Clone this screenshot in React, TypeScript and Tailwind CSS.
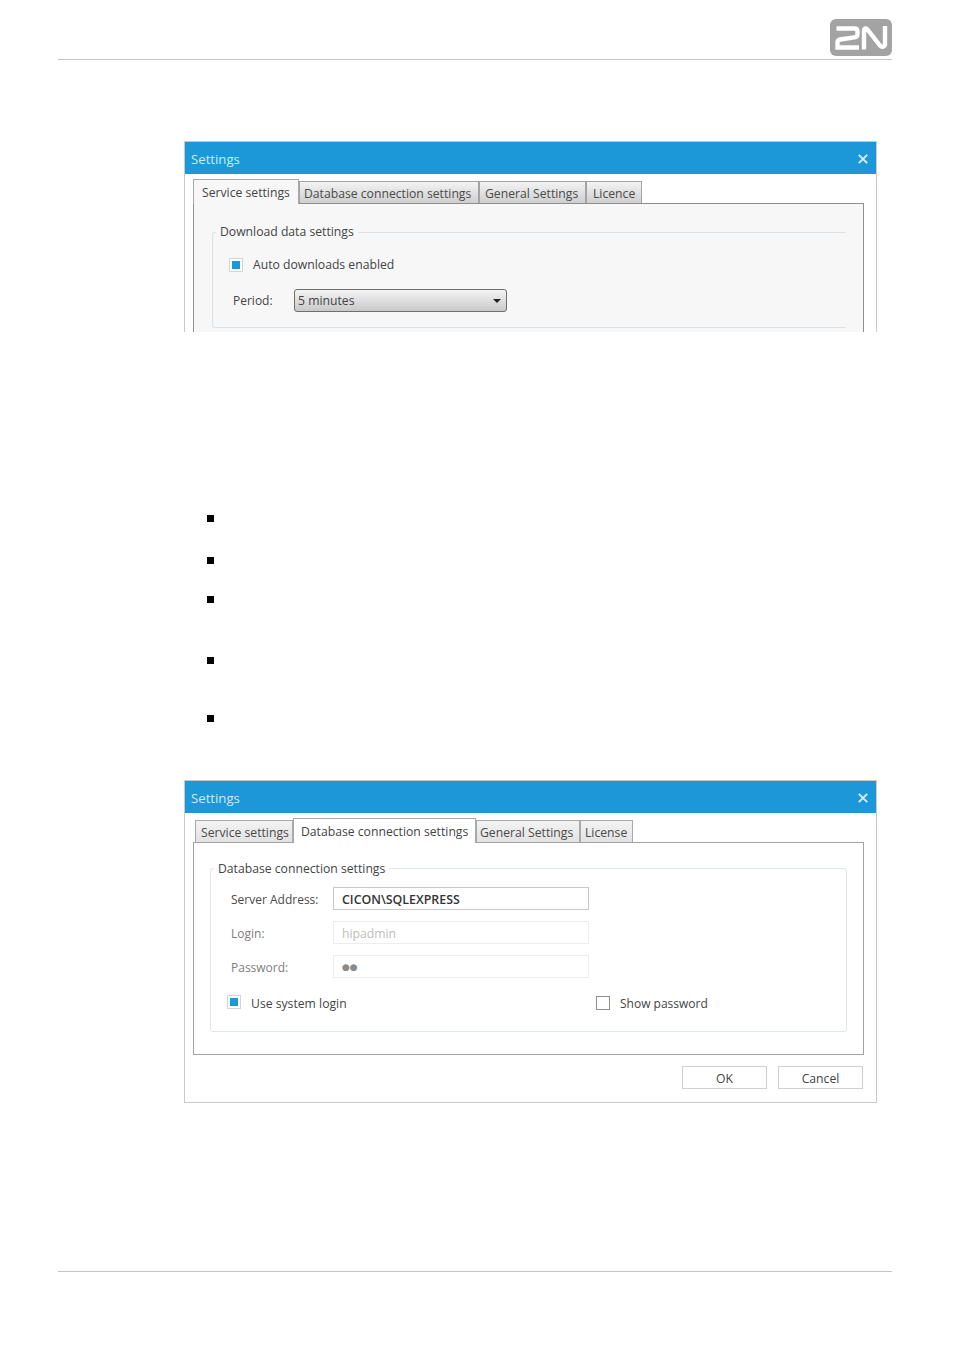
const font = { fontFamily: '"Open Sans", "Noto Sans", sans-serif' };

function Close() {
  return (
    <svg width="10" height="10" viewBox="0 0 10 10" className="block">
      <path d="M0.8 0.8 L9.2 9.2 M9.2 0.8 L0.8 9.2" stroke="#d9eef9" strokeWidth="1.9" fill="none" />
    </svg>
  );
}

function TitleBar() {
  return (
    <div className="h-[32px] shrink-0 bg-[#1c98d8] flex items-center justify-between pl-[6px] pr-[8px] pt-[2px]">
      <span className="text-[13.2px] text-[#cfe9f7] leading-none pt-[2px]">Settings</span>
      <Close />
    </div>
  );
}

function Tab({ label, w, pl, active, dark }: { label: string; w: number; pl: number; active?: boolean; dark?: boolean }) {
  if (active) {
    return (
      <div
        className="h-[25px] -mb-px z-10 relative flex items-center border border-b-0 border-[#a9a9a9] text-[#444] leading-none pt-[2px]"
        style={{ width: w, paddingLeft: pl, background: dark ? "#f7f7f7" : "#ffffff" }}
      >
        {label}
      </div>
    );
  }
  return (
    <div
      className={
        dark
          ? "h-[22px] pt-[4px] flex items-center border border-b-0 border-[#a3a3a3] bg-gradient-to-b from-[#f3f3f3] to-[#cfcfcf] text-[#4a4a4a] leading-none"
          : "h-[22px] pt-[4px] flex items-center border border-b-0 border-[#a9a9a9] bg-gradient-to-b from-[#f3f3f3] to-[#e2e2e2] text-[#4a4a4a] leading-none"
      }
      style={{ width: w, paddingLeft: pl }}
    >
      {label}
    </div>
  );
}

function Check({ on }: { on?: boolean }) {
  return on ? (
    <span className="w-[14px] h-[14px] shrink-0 flex items-center justify-center border border-[#d4d4d4] bg-white">
      <span className="w-[8px] h-[8px] bg-[#1c98d8]" />
    </span>
  ) : (
    <span className="block w-[14px] h-[14px] shrink-0 border border-[#8f8f8f] bg-white" />
  );
}

function Field({ label, children, disabled }: { label: string; children: React.ReactNode; disabled?: boolean }) {
  return (
    <div className="flex items-center h-[23px]">
      <span className={disabled ? "w-[122px] pl-[20px] pt-[3px] shrink-0 text-[12px] text-[#7d7d7d]" : "w-[122px] pl-[20px] pt-[3px] shrink-0 text-[12px] text-[#4a4a4a]"}>{label}</span>
      <span
        className={
          disabled
            ? "w-[256px] h-[23px] flex items-center pl-[8px] pt-[3px] border border-[#ededed] bg-white text-[#bcbcbc]"
            : "w-[256px] h-[23px] flex items-center pl-[8px] pt-[3px] border border-[#c9c9c9] bg-white text-[12.4px] text-[#333] font-semibold"
        }
      >
        {children}
      </span>
    </div>
  );
}

function Bullet({ mt }: { mt: string }) {
  return <li className={`${mt} w-[7px] h-[7px] bg-black`} />;
}

export default function App() {
  return (
    <div className="w-[954px] h-[1350px] bg-white flex flex-col" style={font}>
      <header className="ml-[58px] w-[834px] h-[60px] shrink-0 border-b border-[#c4c4c4] flex justify-end items-start pt-[19px]">
        <svg width="62" height="37" viewBox="0 0 62 37" className="block">
          <rect width="62" height="37" rx="6" fill="#a3a3a3" />
          <path
            d="M6.5 9.5 H24.5 Q27.5 9.5 27.5 12.5 V15 Q27.5 18 24.5 18.4 L10 20.5 Q7.5 21 7.5 23.5 V28.5 H29"
            fill="none"
            stroke="#fff"
            strokeWidth="4.4"
          />
          <path
            d="M34 30.5 V12 Q34 8 37.5 10.5 L50 26.5 Q53.5 29.5 55 26 V7"
            fill="none"
            stroke="#fff"
            strokeWidth="4.4"
          />
        </svg>
      </header>

      <section className="ml-[184px] mt-[81px] w-[693px] h-[191px] shrink-0 overflow-hidden border-x border-t border-[#c9c9c9] bg-white flex flex-col text-[12.2px] text-[#444]">
        <TitleBar />
        <div className="flex items-end pl-[8px] h-[29px] shrink-0">
          <Tab label="Service settings" w={106} pl={8} active dark />
          <Tab label="Database connection settings" w={180} pl={4} dark />
          <Tab label="General Settings" w={107} pl={5} dark />
          <Tab label="Licence" w={56} pl={6} dark />
        </div>
        <div className="ml-[8px] w-[671px] grow border-x border-t border-[#8e8e8e] bg-[#f7f7f7] pl-[18px] pr-[17px] pt-[20px]">
          <fieldset className="h-[104px] border border-[#dbe2e7] border-r-transparent rounded-l-[3px]">
            <legend className="ml-[3px] px-[4px] h-[16px] leading-[16px]">Download data settings</legend>
            <div className="flex items-center gap-[10px] mt-[16px] pl-[16px]">
              <Check on />
              <span>Auto downloads enabled</span>
            </div>
            <div className="flex items-center mt-[15px] h-[23px] pl-[16px]">
              <span className="w-[65px] pl-[4px] shrink-0 text-[12px]">Period:</span>
              <div className="w-[213px] h-[23px] flex items-center justify-between pl-[3px] pr-[5px] rounded-[3px] border border-[#6f6f6f] bg-gradient-to-b from-[#f4f4f4] to-[#c9c9c9]">
                <span>5 minutes</span>
                <span className="w-0 h-0 border-x-[4px] border-x-transparent border-t-[4px] border-t-[#222]" />
              </div>
            </div>
          </fieldset>
        </div>
      </section>

      <ul className="ml-[207px] mt-[183px] shrink-0">
        <Bullet mt="mt-0" />
        <Bullet mt="mt-[35px]" />
        <Bullet mt="mt-[32px]" />
        <Bullet mt="mt-[54px]" />
        <Bullet mt="mt-[51px]" />
      </ul>

      <section className="ml-[184px] mt-[58px] w-[693px] h-[323px] shrink-0 border border-[#c9c9c9] bg-white flex flex-col text-[12.2px] text-[#444]">
        <TitleBar />
        <div className="flex items-end pl-[10px] h-[29px] shrink-0">
          <Tab label="Service settings" w={98} pl={5} />
          <Tab label="Database connection settings" w={183} pl={7} active />
          <Tab label="General Settings" w={104} pl={3} />
          <Tab label="License" w={53} pl={4} />
        </div>
        <div className="ml-[8px] w-[671px] h-[213px] shrink-0 border border-[#a3a3a3] pl-[16px] pr-[16px] pt-[17px]">
          <fieldset className="h-[172px] border border-[#dfe6ea] rounded-[3px]">
            <legend className="ml-[3px] px-[4px] h-[16px] leading-[16px] pt-[1px]">Database connection settings</legend>
            <div className="mt-[11px] flex flex-col gap-[11px]">
              <Field label="Server Address:">CICON\SQLEXPRESS</Field>
              <Field label="Login:" disabled>hipadmin</Field>
              <Field label="Password:" disabled>
                <span className="text-[9px] text-[#8a8a8a]" style={{ fontFamily: '"DejaVu Sans", sans-serif' }}>●●</span>
              </Field>
            </div>
            <div className="flex items-center mt-[15px] pl-[16px]">
              <div className="w-[369px] flex items-center gap-[10px]">
                <span className="flex pb-[2px]"><Check on /></span>
                <span className="pt-[2px]">Use system login</span>
              </div>
              <div className="flex items-center gap-[10px]">
                <span className="flex pb-[1px]"><Check /></span>
                <span className="pt-[2px] text-[12px]">Show password</span>
              </div>
            </div>
          </fieldset>
        </div>
        <div className="flex justify-end gap-[11px] pr-[13px] mt-[11px]">
          <button className="w-[85px] h-[23px] pt-[3px] border border-[#d0d0d0] bg-white text-[#444]">OK</button>
          <button className="w-[85px] h-[23px] pt-[3px] border border-[#d0d0d0] bg-white text-[#444]">Cancel</button>
        </div>
      </section>

      <footer className="ml-[58px] w-[834px] mt-[168px] border-t border-[#c4c4c4]" />
    </div>
  );
}
